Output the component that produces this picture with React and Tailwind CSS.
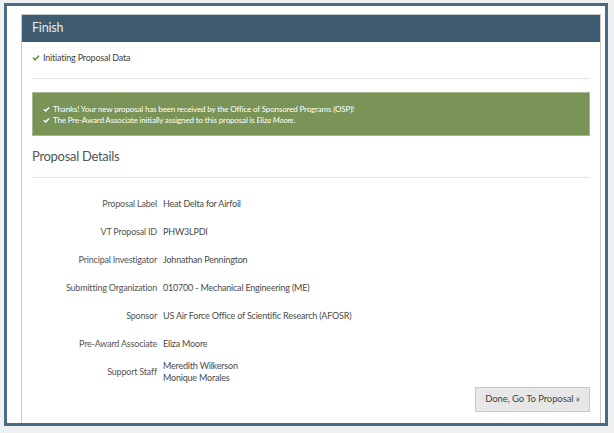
// Finish step of the new-proposal wizard
const font = { fontFamily: 'Lato, "Open Sans", sans-serif' };

const details = [
  ['Proposal Label', ['Heat Delta for Airfoil']],
  ['VT Proposal ID', ['PHW3LPDI']],
  ['Principal Investigator', ['Johnathan Pennington']],
  ['Submitting Organization', ['010700 - Mechanical Engineering (ME)']],
  ['Sponsor', ['US Air Force Office of Scientific Research (AFOSR)']],
  ['Pre-Award Associate', ['Eliza Moore']],
  ['Support Staff', ['Meredith Wilkerson', 'Monique Morales']],
];

function Check({ className }) {
  return (
    <svg viewBox="0 0 16 16" className={className} fill="currentColor">
      <path d="M0.8 8.6 3.2 6.2 6 9 12.8 2.2 15.2 4.6 6 13.8Z" />
    </svg>
  );
}

export default function App() {
  return (
    <div className="w-[614px] h-[433px] bg-[#eef0f1] pl-[4px] pt-[3px] pr-[6px] pb-[7px] flex" style={font}>
      <div className="flex-1 border-[3px] border-[#4a6c82] bg-white pl-[14px] pt-[8px] pr-[4px] overflow-hidden">
        <div className="border border-[#c5cdd3] border-b-0 h-full bg-white">
          <div className="h-[27px] bg-[#3e5b6f] text-[#e6ecf0] text-[12.5px] tracking-[-0.2px] px-[10px] flex items-center">
            Finish
          </div>

          <div className="px-[10px]">
            <div className="flex items-center gap-[3px] h-[16px] mt-[8px] text-[9px] tracking-[-0.2px] text-[#444]">
              <Check className="w-[8px] h-[8px] text-[#6a9a45]" />
              <span>Initiating Proposal Data</span>
            </div>

            <div className="border-t border-[#e4e6e8] mt-[12px]" />

            <div className="mt-[13px] h-[44px] bg-[#7a9357] border border-[#a8b990] text-white text-[8px] tracking-[-0.15px] leading-[11px] px-[10px] pt-[11px]">
              <div className="flex items-center gap-[3px]">
                <Check className="w-[7px] h-[7px]" />
                <span>Thanks! Your new proposal has been received by the Office of Sponsored Programs (OSP)!</span>
              </div>
              <div className="flex items-center gap-[3px]">
                <Check className="w-[7px] h-[7px]" />
                <span>
                  The Pre-Award Associate initially assigned to this proposal is <i>Eliza Moore</i>.
                </span>
              </div>
            </div>

            <div className="mt-[12px] h-[18px] flex items-center text-[13px] tracking-[-0.3px] text-[#555]">
              Proposal Details
            </div>

            <div className="border-t border-[#e4e6e8] mt-[11px]" />

            <div className="mt-[12px] flex flex-col text-[9px] tracking-[-0.2px] text-[#4a4a4a]">
              {details.map(([label, values]) => (
                <div key={label} className="h-[28px] flex items-center gap-[6px] leading-[12px]">
                  <div className="w-[125px] text-right text-[#555]">{label}</div>
                  <div className="flex flex-col">
                    {values.map((v) => (
                      <span key={v}>{v}</span>
                    ))}
                  </div>
                </div>
              ))}
            </div>

            <div className="flex justify-end mt-[1px]">
              <button className="h-[25px] w-[115px] bg-[#e7e7e7] border border-[#c8c8c8] text-[9.5px] tracking-[-0.1px] text-[#444]">
                Done, Go To Proposal »
              </button>
            </div>
          </div>
        </div>
      </div>
    </div>
  );
}
